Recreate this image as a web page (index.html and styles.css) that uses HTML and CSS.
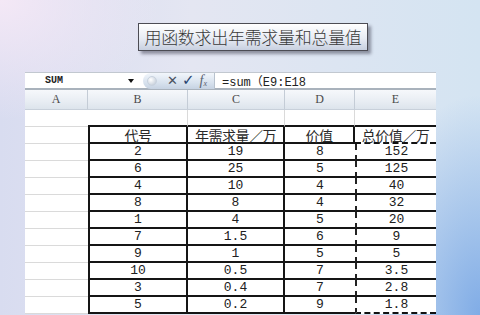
FILE: index.html
```html
<!DOCTYPE html>
<html lang="zh">
<head>
<meta charset="utf-8">
<link rel="stylesheet" href="styles.css">
</head>
<body>
<div class="stage">
  <div class="title">用函数求出年需求量和总量值</div>
  <div class="sheet">
    <div class="fbar">
      <div class="namebox">SUM</div>
      <div class="arrow"></div>
      <div class="btns">
        <span class="dot"></span>
        <span class="x">✕</span>
        <span class="ok">✓</span>
        <span class="fx">f<sub>x</sub></span>
      </div>
      <div class="formula">=sum（E9:E18</div>
    </div>
    <div class="grid">
      <div class="h">A</div><div class="h">B</div><div class="h">C</div><div class="h">D</div><div class="h hl">E</div>

      <div class="a"></div><div class="r1"></div><div class="r1"></div><div class="r1"></div><div class="r1 last"></div>

      <div class="a"></div><div class="t b cjk">代号</div><div class="t c cjk">年需求量／万</div><div class="t d dh cjk">价值</div><div class="t e eh cjk">总价值／万</div>

      <div class="a"></div><div class="t b">2</div><div class="t c">19</div><div class="t d">8</div><div class="t e">152</div>
      <div class="a"></div><div class="t b">6</div><div class="t c">25</div><div class="t d">5</div><div class="t e">125</div>
      <div class="a"></div><div class="t b">4</div><div class="t c">10</div><div class="t d">4</div><div class="t e">40</div>
      <div class="a"></div><div class="t b">8</div><div class="t c">8</div><div class="t d">4</div><div class="t e">32</div>
      <div class="a"></div><div class="t b">1</div><div class="t c">4</div><div class="t d">5</div><div class="t e">20</div>
      <div class="a"></div><div class="t b">7</div><div class="t c">1.5</div><div class="t d">6</div><div class="t e">9</div>
      <div class="a"></div><div class="t b">9</div><div class="t c">1</div><div class="t d">5</div><div class="t e">5</div>
      <div class="a"></div><div class="t b">10</div><div class="t c">0.5</div><div class="t d">7</div><div class="t e">3.5</div>
      <div class="a"></div><div class="t b">3</div><div class="t c">0.4</div><div class="t d">7</div><div class="t e">2.8</div>
      <div class="a"></div><div class="t b">5</div><div class="t c">0.2</div><div class="t d">9</div><div class="t e ee">1.8</div>
    </div>
  </div>
</div>
</body>
</html>
```

FILE: styles.css
```css
html, body {
  margin: 0;
  padding: 0;
}
body {
  width: 480px;
  height: 315px;
  overflow: hidden;
  background:
    radial-gradient(ellipse 120px 220px at 480px 315px, #80ace6 0%, rgba(128,172,230,0) 100%),
    radial-gradient(ellipse 160px 120px at 0px 0px, #f4e8f6 0%, rgba(244,232,246,0) 100%),
    linear-gradient(to right, #d8dcf0 0%, #e4e6f2 40%, #d4e4f2 100%);
  font-family: "Noto Sans CJK SC", sans-serif;
}
.stage {
  padding-top: 23px;
}
.title {
  box-sizing: border-box;
  margin-left: 138px;
  width: 230px;
  height: 28px;
  border: 1px solid #4c4c54;
  background: linear-gradient(to bottom, #ffffff 0%, #e8ecf4 55%, #c8d0e0 100%);
  box-shadow: 3px 3px 3px rgba(40, 40, 60, 0.45);
  color: #3a3a3a;
  font-size: 17px;
  line-height: 26px;
  text-align: center;
  letter-spacing: -0.3px;
  font-weight: 300;
}
.sheet {
  margin-top: 21px;
  margin-left: 25px;
  width: 411px;
  background: #fff;
}
.fbar {
  box-sizing: border-box;
  height: 18px;
  border-top: 1px solid #c2c8d0;
  border-bottom: 2px solid #a9b2bc;
  display: flex;
  align-items: center;
  background: #fff;
}
.namebox {
  width: 100px;
  padding-left: 20px;
  box-sizing: border-box;
  font-family: "Liberation Mono", monospace;
  font-size: 10px;
  font-weight: bold;
  color: #222;
}
.arrow {
  width: 0;
  height: 0;
  border-left: 3px solid transparent;
  border-right: 3px solid transparent;
  border-top: 4px solid #111;
  margin-left: 3px;
}
.btns {
  margin-left: 9px;
  width: 72px;
  height: 16px;
  box-sizing: border-box;
  border-radius: 8px 0 0 8px;
  border-right: 1px solid #b8c2ce;
  background: linear-gradient(to bottom, #f2f6fb 0%, #d8e2ee 60%, #c6d2e2 100%);
  display: flex;
  align-items: center;
  gap: 4px;
  padding-left: 4px;
}
.dot {
  width: 8px;
  height: 8px;
  border-radius: 50%;
  background: radial-gradient(circle at 35% 35%, #ffffff, #b8c4d2);
  border: 1px solid #c8d2de;
}
.x {
  font-size: 13px;
  color: #4a5260;
  font-weight: bold;
  font-family: "DejaVu Sans", sans-serif;
  margin-left: 6px;
  line-height: 1;
}
.ok {
  font-size: 15px;
  color: #25426e;
  font-weight: bold;
  font-family: "DejaVu Sans", sans-serif;
  line-height: 1;
}
.fx {
  font-family: "Liberation Serif", serif;
  font-style: italic;
  font-size: 14px;
  color: #5a6270;
  line-height: 1;
  margin-left: 1px;
}
.fx sub {
  font-size: 8px;
  vertical-align: -1px;
}
.formula {
  margin-left: 7px;
  font-family: "Liberation Mono", "Noto Sans CJK SC", monospace;
  font-size: 12px;
  color: #222;
}
.grid {
  display: grid;
  grid-template-columns: 63px 100px 97px 70px 81px;
  grid-template-rows: 20px;
  grid-auto-rows: 17px;
}
.grid > div {
  box-sizing: border-box;
  display: flex;
  align-items: center;
  justify-content: center;
}
.grid > .h {
  background: linear-gradient(to bottom, #f6f8fb 0%, #e8edf3 60%, #dde4ec 100%);
  border-right: 1px solid #c4ccd6;
  border-bottom: 1px solid #c8d0da;
  color: #4a4a4a;
  font-family: "Liberation Serif", serif;
  font-size: 12px;
}
.grid > .h.hl {
  border-right: none;
}
.grid > .a {
  border-bottom: 1px solid #dadada;
}
.grid > .r1 {
  border-right: 1px solid #dadada;
  border-bottom: 2px solid #151515;
}
.grid > .r1.last {
  border-right: none;
}
.t {
  font-family: "Liberation Mono", monospace;
  font-size: 13px;
  color: #202020;
  border-bottom: 2px solid #151515;
}
.t.cjk {
  font-family: "Noto Sans CJK SC", sans-serif;
  font-size: 14px;
  letter-spacing: -0.5px;
  color: #2a2a2a;
}
.grid > .b {
  border-left: 2px solid #151515;
  border-right: 2px solid #151515;
}
.grid > .c {
  border-right: 2px solid #151515;
}
.grid > .dh {
  border-right: 2px solid #151515;
}
.grid > .e {
  border-left: 2px dashed #222;
}
.grid > .eh {
  border-left: none;
  border-bottom: 2px dashed #111;
}
.grid > .ee {
  border-bottom: 2px dashed #111;
}
```
